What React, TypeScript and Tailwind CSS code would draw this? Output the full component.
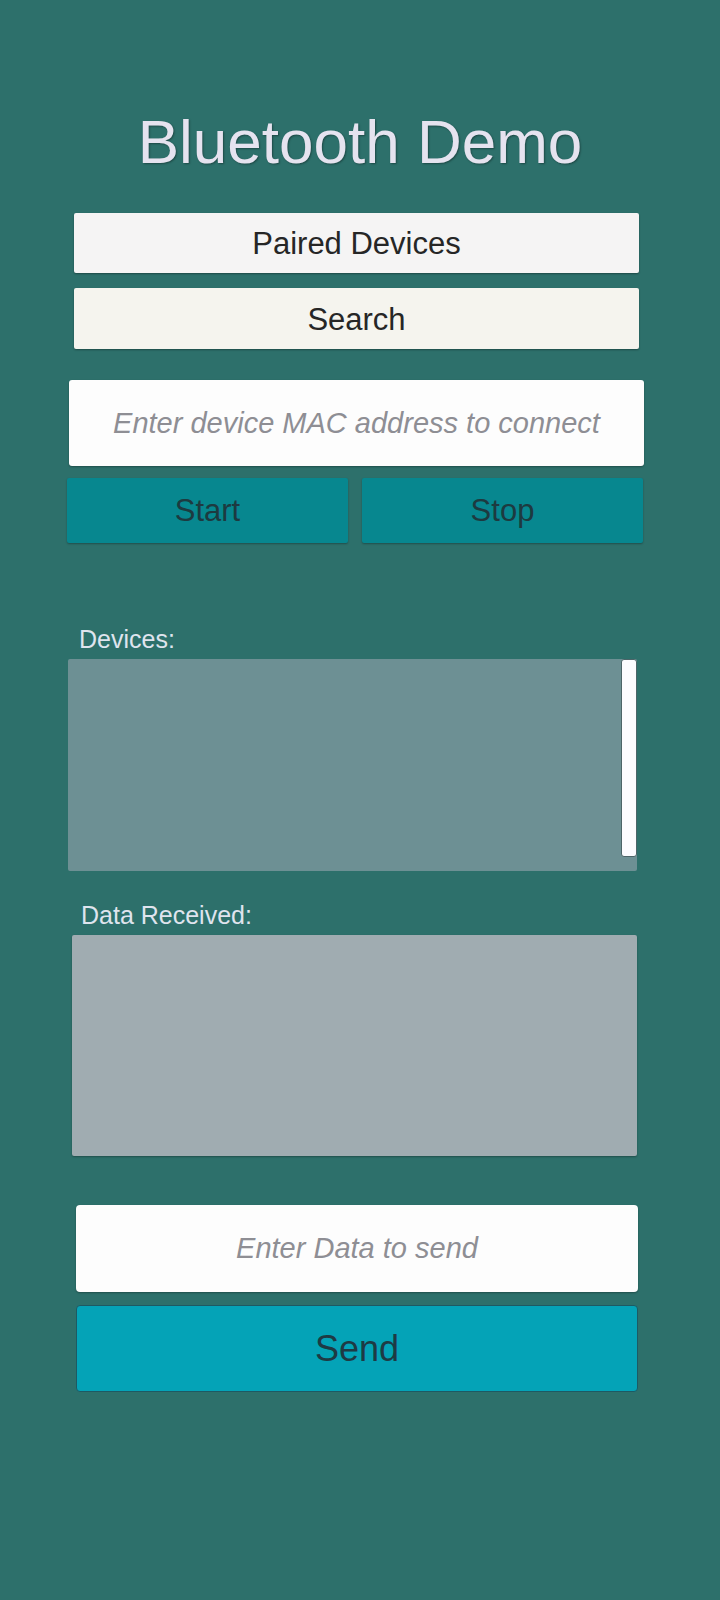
import React from 'react'

const font = "font-['Liberation_Sans',Arial,sans-serif]"

export default function App() {
  return (
    <div className={`min-h-[1600px] w-[720px] bg-[#2d706b] ${font} flex flex-col`}>
      {/* title */}
      <h1 className="mt-[104px] h-[76px] text-center text-[62px] leading-[76px] text-[#e5e3ef] [text-shadow:1px_1px_2px_rgba(0,0,0,0.35)]">
        Bluetooth Demo
      </h1>

      {/* top buttons */}
      <button className="mt-[33px] ml-[74px] w-[565px] h-[60px] pt-[3px] rounded-[2px] bg-[#f5f4f4] text-[31px] text-[#262626] flex items-center justify-center shadow-[0_1px_2px_rgba(0,0,0,0.35)]">
        Paired Devices
      </button>
      <button className="mt-[15px] ml-[74px] w-[565px] h-[61px] pt-[3px] rounded-[2px] bg-[#f5f4ee] text-[31px] text-[#262626] flex items-center justify-center shadow-[0_1px_2px_rgba(0,0,0,0.35)]">
        Search
      </button>

      {/* MAC input */}
      <input
        className="mt-[31px] ml-[69px] w-[575px] h-[86px] rounded-[3px] bg-[#fdfdfd] text-center italic text-[29px] text-[#333] placeholder:text-[#8e8e94] outline-none shadow-[0_1px_2px_rgba(0,0,0,0.3)]"
        placeholder="Enter device MAC address to connect"
      />

      {/* start / stop */}
      <div className="mt-[12px] ml-[67px] w-[576px] h-[65px] flex gap-[14px]">
        <button className="flex-1 pt-[2px] rounded-[2px] bg-[#07878f] text-[31px] text-[#1d3a40] flex items-center justify-center shadow-[0_1px_2px_rgba(0,0,0,0.3)]">
          Start
        </button>
        <button className="flex-1 pt-[2px] rounded-[2px] bg-[#07878f] text-[31px] text-[#1d3a40] flex items-center justify-center shadow-[0_1px_2px_rgba(0,0,0,0.3)]">
          Stop
        </button>
      </div>

      {/* devices list */}
      <div className="mt-[82px] ml-[79px] h-[28px] text-[25px] leading-[28px] text-[#dfe4ee]">Devices:</div>
      <div className="mt-[6px] ml-[68px] w-[569px] h-[212px] rounded-[2px] bg-[#6d9094] flex justify-end">
        <div className="w-[16px] h-[198px] rounded-[3px] bg-[#fbfbfe] border border-[#4c6468]" />
      </div>

      {/* data received */}
      <div className="mt-[30px] ml-[81px] h-[28px] text-[25px] leading-[28px] text-[#dfe4ee]">Data Received:</div>
      <div className="mt-[6px] ml-[72px] w-[565px] h-[221px] rounded-[2px] bg-[#a0acb1] shadow-[0_1px_2px_rgba(0,0,0,0.3)]" />

      {/* send */}
      <input
        className="mt-[49px] ml-[76px] w-[562px] h-[87px] rounded-[4px] bg-[#fdfdfd] text-center italic text-[29px] text-[#333] placeholder:text-[#8e8e94] outline-none shadow-[0_1px_2px_rgba(0,0,0,0.3)]"
        placeholder="Enter Data to send"
      />
      <button className="mt-[13px] ml-[76px] w-[562px] h-[87px] rounded-[4px] bg-[#04a3b7] border border-[#1d5a63] text-[36px] text-[#1e3a44] flex items-center justify-center">
        Send
      </button>
    </div>
  )
}
